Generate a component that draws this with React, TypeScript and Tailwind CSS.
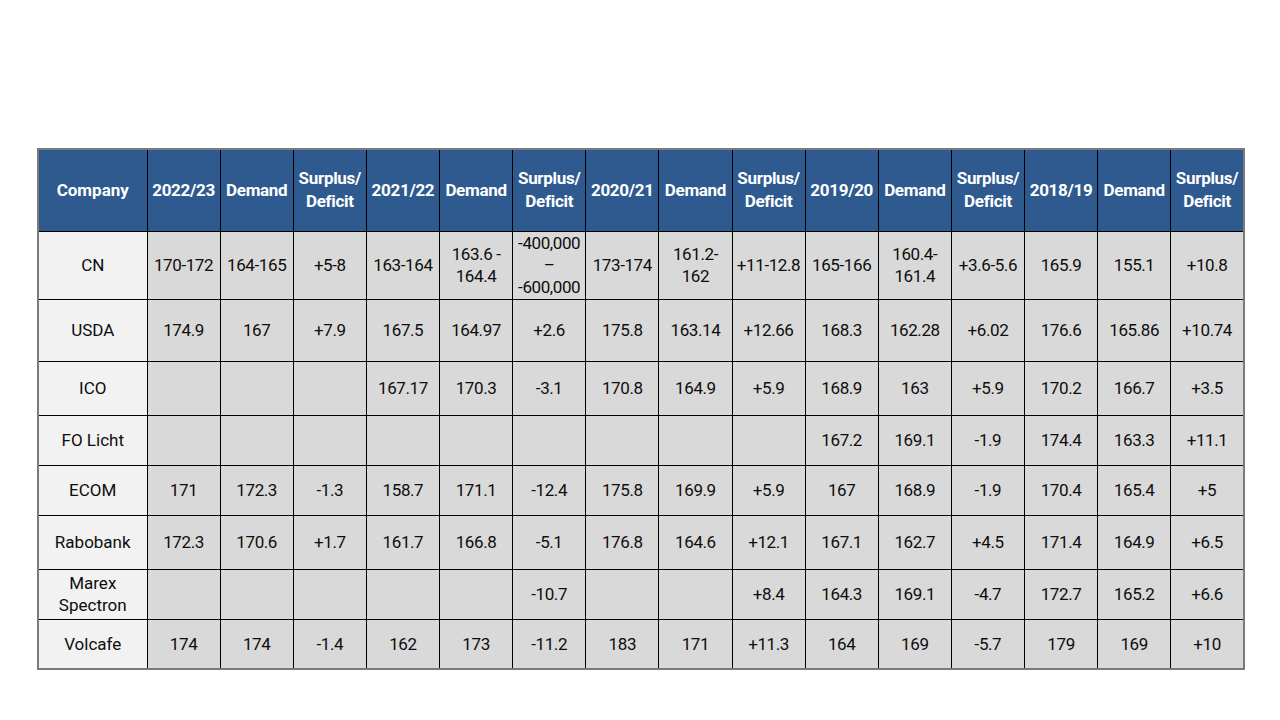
const header = [
  "2022/23", "Demand", "Surplus/ Deficit",
  "2021/22", "Demand", "Surplus/ Deficit",
  "2020/21", "Demand", "Surplus/ Deficit",
  "2019/20", "Demand", "Surplus/ Deficit",
  "2018/19", "Demand", "Surplus/ Deficit",
];

type Row = { name: string; h: string; cells: string[] };

const rows: Row[] = [
  {
    name: "CN",
    h: "h-[68px]",
    cells: ["170-172", "164-165", "+5-8", "163-164", "163.6 -\n164.4", "-400,000\n–\n-600,000", "173-174", "161.2-\n162", "+11-12.8", "165-166", "160.4-\n161.4", "+3.6-5.6", "165.9", "155.1", "+10.8"],
  },
  {
    name: "USDA",
    h: "h-[62px]",
    cells: ["174.9", "167", "+7.9", "167.5", "164.97", "+2.6", "175.8", "163.14", "+12.66", "168.3", "162.28", "+6.02", "176.6", "165.86", "+10.74"],
  },
  {
    name: "ICO",
    h: "h-[54px]",
    cells: ["", "", "", "167.17", "170.3", "-3.1", "170.8", "164.9", "+5.9", "168.9", "163", "+5.9", "170.2", "166.7", "+3.5"],
  },
  {
    name: "FO Licht",
    h: "h-[50px]",
    cells: ["", "", "", "", "", "", "", "", "", "167.2", "169.1", "-1.9", "174.4", "163.3", "+11.1"],
  },
  {
    name: "ECOM",
    h: "h-[50px]",
    cells: ["171", "172.3", "-1.3", "158.7", "171.1", "-12.4", "175.8", "169.9", "+5.9", "167", "168.9", "-1.9", "170.4", "165.4", "+5"],
  },
  {
    name: "Rabobank",
    h: "h-[54px]",
    cells: ["172.3", "170.6", "+1.7", "161.7", "166.8", "-5.1", "176.8", "164.6", "+12.1", "167.1", "162.7", "+4.5", "171.4", "164.9", "+6.5"],
  },
  {
    name: "Marex\nSpectron",
    h: "h-[50px]",
    cells: ["", "", "", "", "", "-10.7", "", "", "+8.4", "164.3", "169.1", "-4.7", "172.7", "165.2", "+6.6"],
  },
  {
    name: "Volcafe",
    h: "h-[50px]",
    cells: ["174", "174", "-1.4", "162", "173", "-11.2", "183", "171", "+11.3", "164", "169", "-5.7", "179", "169", "+10"],
  },
];

export default function App() {
  return (
    <div className="h-[720px] w-[1280px] bg-white pl-[37px] pt-[148px] font-['Roboto',sans-serif] text-[17px] text-[#0d0d0d]">
      <table className="w-[1206px] table-fixed border-collapse border-2 border-[#7a7a7a]">
        <colgroup>
          <col className="w-[109px]" />
          {header.map((_, i) => (
            <col key={i} className="w-[73.13px]" />
          ))}
        </colgroup>
        <thead>
          <tr className="h-[82px] bg-[#2e5a8f] text-white">
            <th className="border border-black text-center font-bold leading-[23px]">
              Company
            </th>
            {header.map((t, i) => (
              <th
                key={i}
                className="border border-black px-0 text-center font-bold leading-[23px] tracking-[-0.3px] whitespace-pre-line"
              >
                {t.replace(" ", "\n")}
              </th>
            ))}
          </tr>
        </thead>
        <tbody>
          {rows.map((r) => (
            <tr key={r.name} className={r.h}>
              <td className="border border-black bg-[#f2f2f2] p-0 text-center leading-[22px] whitespace-pre-line">
                {r.name}
              </td>
              {r.cells.map((c, i) => (
                <td
                  key={i}
                  className="border border-black bg-[#d9d9d9] p-0 text-center leading-[22px] tracking-[-0.4px] whitespace-pre-line"
                >
                  {c}
                </td>
              ))}
            </tr>
          ))}
        </tbody>
      </table>
    </div>
  );
}
